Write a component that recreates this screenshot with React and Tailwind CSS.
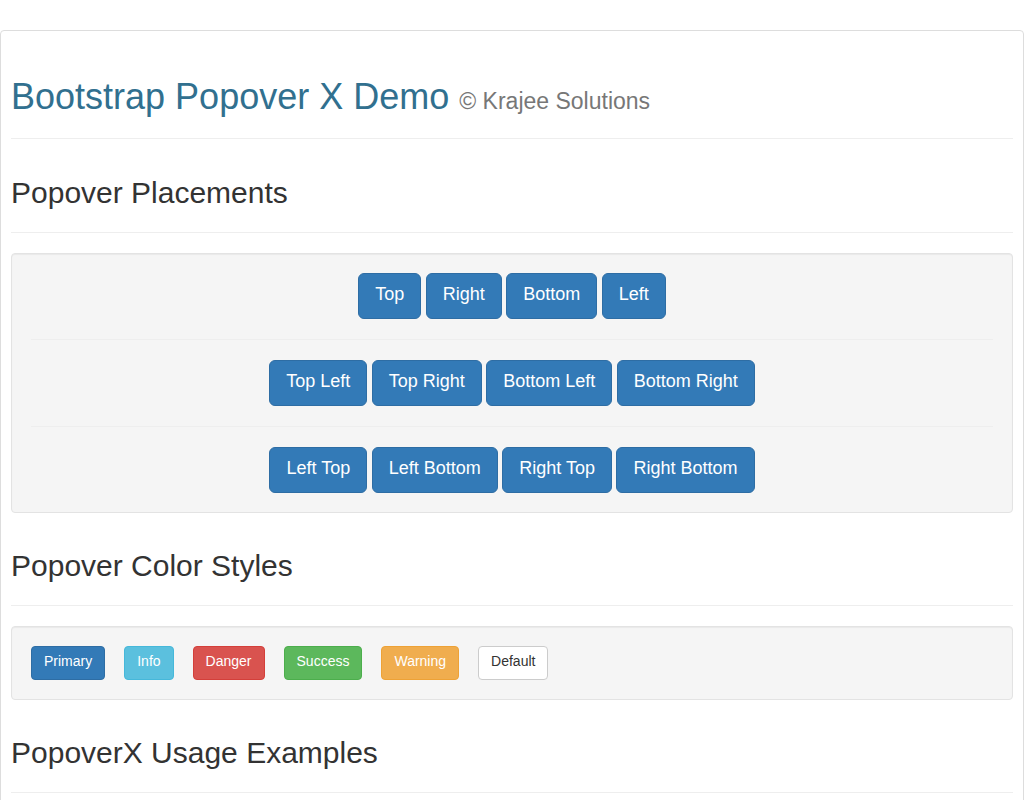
import React from "react";

const lgBtn =
  "inline-block bg-[#337ab7] border border-[#2e6da4] text-white text-[18px] leading-[24px] px-[16px] pt-[8px] pb-[12px] rounded-[6px] whitespace-nowrap";

function Row({ items }) {
  return (
    <div className="flex justify-center gap-[4.5px]">
      {items.map((t) => (
        <button key={t} className={lgBtn}>
          {t}
        </button>
      ))}
    </div>
  );
}

function Heading({ children, mt }) {
  return (
    <div className={`${mt} pb-[23px] border-b border-[#eee]`}>
      <h2 className="text-[30px] leading-[33px] font-normal text-[#333]">{children}</h2>
    </div>
  );
}

const colorBtns = [
  ["Primary", "bg-[#337ab7] border-[#2e6da4] text-white"],
  ["Info", "bg-[#5bc0de] border-[#46b8da] text-white"],
  ["Danger", "bg-[#d9534f] border-[#d43f3a] text-white"],
  ["Success", "bg-[#5cb85c] border-[#4cae4c] text-white"],
  ["Warning", "bg-[#f0ad4e] border-[#eea236] text-white"],
  ["Default", "bg-white border-[#ccc] text-[#333]"],
];

export default function App() {
  return (
    <div className="pt-[30px] font-['Liberation_Sans',Arial,sans-serif] text-[14px] text-[#333] bg-white">
      <div className="border border-[#ddd] rounded-[4px] px-[10px] pb-[30px]">
        <div className="pt-[46px] pb-[21px] border-b border-[#eee]">
          <h1 className="text-[36px] leading-[39.6px] font-normal text-[#31708f]">
            Bootstrap Popover X Demo{" "}
            <small className="text-[23px] leading-none text-[#777]">© Krajee Solutions</small>
          </h1>
        </div>

        <Heading mt="mt-[37px]">Popover Placements</Heading>
        <div className="mt-[20px] border border-[#e3e3e3] bg-[#f5f5f5] rounded-[4px] p-[19px] shadow-[inset_0_1px_1px_rgba(0,0,0,0.05)]">
          <Row items={["Top", "Right", "Bottom", "Left"]} />
          <div className="my-[20px] border-t border-[#eee]" />
          <Row items={["Top Left", "Top Right", "Bottom Left", "Bottom Right"]} />
          <div className="my-[20px] border-t border-[#eee]" />
          <Row items={["Left Top", "Left Bottom", "Right Top", "Right Bottom"]} />
        </div>

        <Heading mt="mt-[36px]">Popover Color Styles</Heading>
        <div className="mt-[20px] border border-[#e3e3e3] bg-[#f5f5f5] rounded-[4px] p-[19px] shadow-[inset_0_1px_1px_rgba(0,0,0,0.05)]">
          <div className="flex gap-[19px]">
            {colorBtns.map(([t, c]) => (
              <button
                key={t}
                className={`inline-block border ${c} text-[14px] leading-[20px] px-[12px] pt-[4px] pb-[8px] rounded-[4px] whitespace-nowrap`}
              >
                {t}
              </button>
            ))}
          </div>
        </div>

        <Heading mt="mt-[36px]">PopoverX Usage Examples</Heading>
        <div className="h-[60px]" />
      </div>
    </div>
  );
}
